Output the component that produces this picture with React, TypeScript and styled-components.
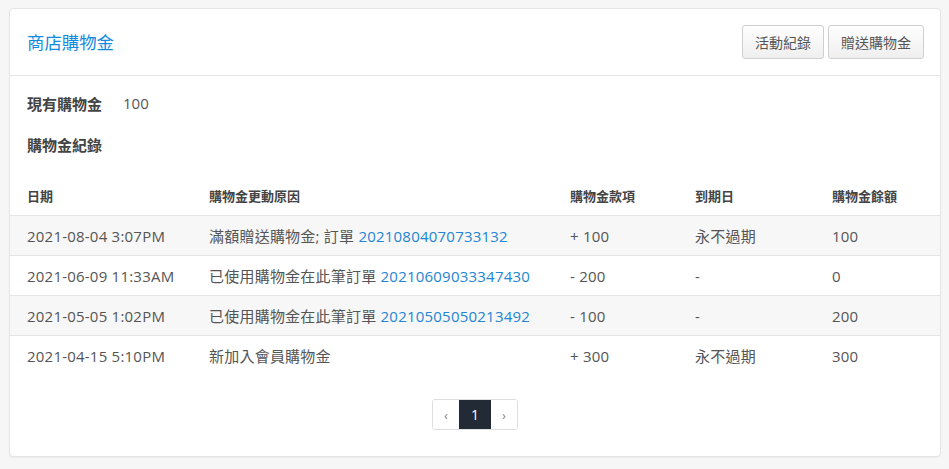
import React from "react";
import styled, { createGlobalStyle } from "styled-components";

const GlobalStyle = createGlobalStyle`
  html, body {
    margin: 0;
    padding: 0;
    background: #f6f6f6;
  }
  body {
    font-family: "Open Sans", "Noto Sans CJK TC", sans-serif;
    color: #555;
    -webkit-font-smoothing: antialiased;
  }
  * { box-sizing: border-box; }
`;

const Page = styled.div`
  padding: 8px 8px 12px 9px;
`;

const Card = styled.section`
  background: #fff;
  border: 1px solid #e4e4e4;
  border-radius: 4px;
  box-shadow: 0 1px 1px rgba(0, 0, 0, 0.04);
`;

const CardHeader = styled.header`
  display: flex;
  align-items: center;
  justify-content: space-between;
  padding: 16px 16px 16px 17px;
  border-bottom: 1px solid #e6e6e6;
`;

const Title = styled.h1`
  margin: 0;
  font-family: "Noto Sans CJK TC", sans-serif;
  font-size: 17.4px;
  font-weight: 400;
  color: #0f8be2;
  line-height: 24px;
`;

const Actions = styled.div`
  display: flex;
  gap: 4px;
`;

const Button = styled.button`
  height: 34px;
  padding: 0 12px;
  border: 1px solid #cfcfcf;
  border-radius: 3px;
  background: linear-gradient(#ffffff, #efefef);
  font-family: "Noto Sans CJK TC", sans-serif;
  font-size: 14px;
  color: #555;
  cursor: pointer;
`;

const CardBody = styled.div`
  padding: 16px 0 26px;
`;

const InfoLine = styled.div`
  display: flex;
  align-items: center;
  gap: 21px;
  padding: 0 17px;
  height: 22px;
  font-size: 15px;
`;

const Label = styled.span`
  font-family: "Noto Sans CJK TC", sans-serif;
  font-weight: 700;
  color: #444;
`;

const Value = styled.span`
  font-family: "Open Sans", sans-serif;
  color: #555;
`;

const SectionTitle = styled.h2`
  margin: 20px 0 19px;
  padding: 0 17px;
  height: 22px;
  line-height: 22px;
  font-family: "Noto Sans CJK TC", sans-serif;
  font-size: 15px;
  font-weight: 700;
  color: #444;
`;

const Row = styled.div<{ $head?: boolean; $striped?: boolean }>`
  display: grid;
  grid-template-columns: 182px 361px 125px 137px 1fr;
  align-items: center;
  height: 40px;
  border-top: ${(p) => (p.$head ? "none" : "1px solid #e4e4e4")};
  background: ${(p) => (p.$striped ? "#f7f7f7" : "#fff")};
  font-size: ${(p) => (p.$head ? "13px" : "15px")};
  font-weight: ${(p) => (p.$head ? 600 : 400)};
  letter-spacing: ${(p) => (p.$head ? "0" : "0.22px")};
  color: ${(p) => (p.$head ? "#444" : "#555")};
`;

const Cell = styled.div`
  padding: 0 17px;
  white-space: nowrap;
`;

const OrderLink = styled.a`
  color: #2385d3;
  text-decoration: none;
`;

const PagerWrap = styled.nav`
  display: flex;
  justify-content: center;
  margin-top: 24px;
`;

const Pager = styled.div`
  display: flex;
  height: 31px;
  border: 1px solid #dedede;
  border-radius: 3px;
  overflow: hidden;
`;

const PageItem = styled.span<{ $active?: boolean; $w: number }>`
  display: flex;
  align-items: center;
  justify-content: center;
  width: ${(p) => p.$w}px;
  background: ${(p) => (p.$active ? "#212a35" : "#fff")};
  color: ${(p) => (p.$active ? "#fff" : "#888")};
  font-size: ${(p) => (p.$active ? "14px" : "13px")};
`;

type Rec = {
  date: string;
  reason: string;
  order?: string;
  amount: string;
  expire: string;
  balance: string;
};

const records: Rec[] = [
  { date: "2021-08-04 3:07PM", reason: "滿額贈送購物金; 訂單 ", order: "20210804070733132", amount: "+ 100", expire: "永不過期", balance: "100" },
  { date: "2021-06-09 11:33AM", reason: "已使用購物金在此筆訂單 ", order: "20210609033347430", amount: "- 200", expire: "-", balance: "0" },
  { date: "2021-05-05 1:02PM", reason: "已使用購物金在此筆訂單 ", order: "20210505050213492", amount: "- 100", expire: "-", balance: "200" },
  { date: "2021-04-15 5:10PM", reason: "新加入會員購物金", amount: "+ 300", expire: "永不過期", balance: "300" },
];

export default function App() {
  return (
    <>
      <GlobalStyle />
      <Page>
        <Card>
          <CardHeader>
            <Title>商店購物金</Title>
            <Actions>
              <Button>活動紀錄</Button>
              <Button>贈送購物金</Button>
            </Actions>
          </CardHeader>
          <CardBody>
            <InfoLine>
              <Label>現有購物金</Label>
              <Value>100</Value>
            </InfoLine>
            <SectionTitle>購物金紀錄</SectionTitle>
            <Row $head>
              <Cell>日期</Cell>
              <Cell>購物金更動原因</Cell>
              <Cell>購物金款項</Cell>
              <Cell>到期日</Cell>
              <Cell>購物金餘額</Cell>
            </Row>
            {records.map((r, i) => (
              <Row key={r.date} $striped={i % 2 === 0}>
                <Cell>{r.date}</Cell>
                <Cell>
                  {r.reason}
                  {r.order && <OrderLink href="#">{r.order}</OrderLink>}
                </Cell>
                <Cell>{r.amount}</Cell>
                <Cell>{r.expire}</Cell>
                <Cell>{r.balance}</Cell>
              </Row>
            ))}
            <PagerWrap>
              <Pager>
                <PageItem $w={26}>‹</PageItem>
                <PageItem $w={32} $active>1</PageItem>
                <PageItem $w={26}>›</PageItem>
              </Pager>
            </PagerWrap>
          </CardBody>
        </Card>
      </Page>
    </>
  );
}
